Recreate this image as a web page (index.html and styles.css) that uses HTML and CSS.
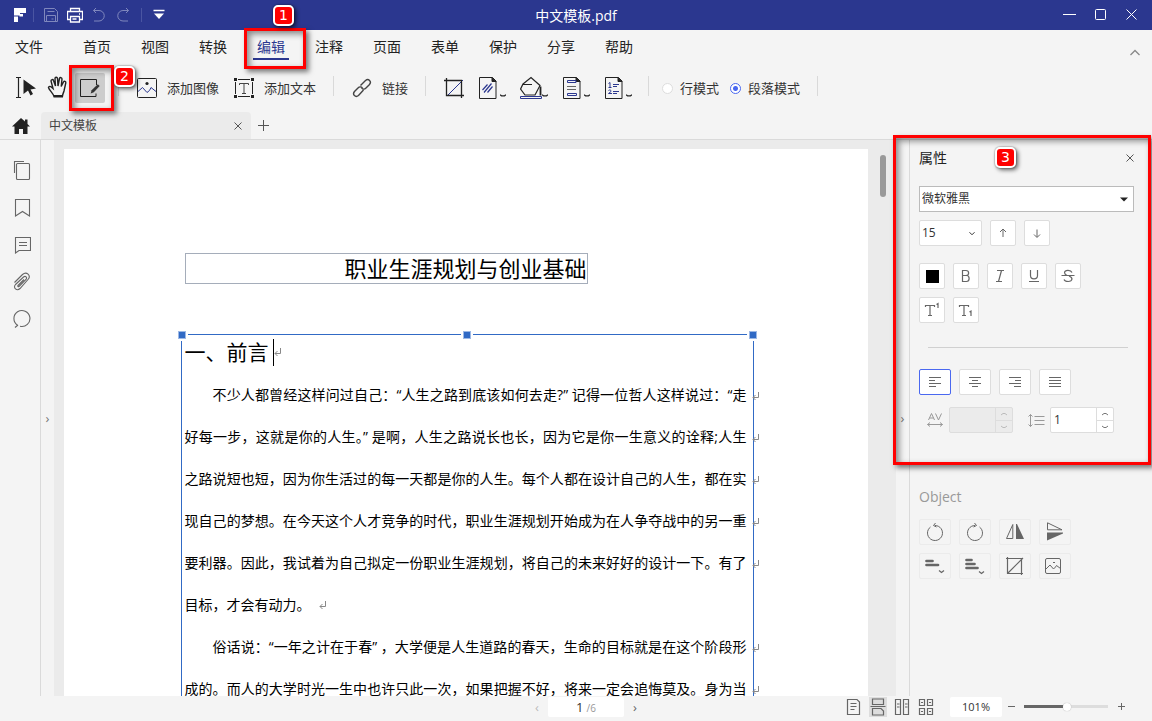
FILE: index.html
```html
<!DOCTYPE html>
<html lang="zh-CN">
<head>
<meta charset="utf-8">
<title>中文模板.pdf</title>
<link rel="stylesheet" href="styles.css">
</head>
<body>
<svg class="defs" aria-hidden="true">
  <symbol id="ret" viewBox="0 0 8 10"><path d="M6.500 1v5.500H1M3.500 4 1 6.500 3.500 9"/></symbol>
  <symbol id="chev" viewBox="0 0 6 4"><path d="M0 .8 1.500 1.800H4.500L6 .8"/></symbol>
  <symbol id="x" viewBox="0 0 10 10"><path d="M1.500 1.500l7 7M8.500 1.500l-7 7"/></symbol>
  <symbol id="up" viewBox="0 0 8 4"><path d="M1 3 3 1.500h2L7 3"/></symbol>
  <symbol id="down" viewBox="0 0 8 4"><path d="M1 1 3 2.500h2L7 1"/></symbol>
</svg>
<div class="app">
  <header class="titlebar">
    <div class="quick">
      <svg class="logo" viewBox="0 0 12 14" width="12" height="14"><path d="M0 0h12v5H6v2.500H0zM0 8.500h4V14H0zM5.500 6H9v2.500H5.500z" fill="#fff"/></svg>
      <span class="vline"></span>
      <button class="qbtn dim" aria-label="保存"><svg viewBox="0 0 16 16"><path d="M1.500 1.500h10l3 3v10h-13zM4.500 4.500h7M3.500 14.500v-6h9v6M8.500 12h2"/></svg></button>
      <button class="qbtn" aria-label="打印"><svg viewBox="0 0 16 16"><path d="M3.500 5V1.500h9V5M3.500 12.500h-3v-8h15v8h-3M3.500 9.500h9v5.500h-9zM12 7h1M5.500 12h4" stroke-width="1.300"/></svg></button>
      <button class="qbtn dim" aria-label="撤销"><svg viewBox="0 0 16 16"><path d="M5 1 2.500 3.500 5 6M2.500 3.500H8a5 5 0 0 1 0 10.500H3"/></svg></button>
      <button class="qbtn dim" aria-label="重做"><svg viewBox="0 0 16 16"><path d="M11 1l2.500 2.500L11 6M13.500 3.500H8A5 5 0 0 0 8 14h5"/></svg></button>
      <span class="vline"></span>
      <button class="qbtn" aria-label="更多"><svg viewBox="0 0 16 16"><path d="M2.500 3.500h11" stroke-width="1.500"/><path d="M3 6.500h10L8 12z" fill="#fff" stroke="none"/></svg></button>
    </div>
    <h1 class="doc-name">中文模板.pdf</h1>
    <div class="winbtns">
      <button aria-label="最小化"><svg viewBox="0 0 13 13"><path d="M0 5.500h13"/></svg></button>
      <button aria-label="最大化"><svg viewBox="0 0 13 13"><rect x="1.500" y=".5" width="10" height="10" rx="1"/></svg></button>
      <button aria-label="关闭"><svg viewBox="0 0 13 13"><path d="M1.500 .5l10 10M11.500 .5l-10 10"/></svg></button>
    </div>
  </header>

  <nav class="menu">
    <button class="file">文件</button>
    <button>首页</button>
    <button>视图</button>
    <button>转换</button>
    <div class="mark-host">
      <button class="current">编辑</button>
      <span class="frame frame-menu"></span><span class="badge badge-menu">1</span>
    </div>
    <button>注释</button>
    <button>页面</button>
    <button>表单</button>
    <button>保护</button>
    <button>分享</button>
    <button>帮助</button>
    <button class="collapse" aria-label="收起"><svg viewBox="0 0 12 7"><path d="M1.500 6 6 1.500 10.500 6"/></svg></button>
  </nav>

  <div class="toolbar">
    <button class="tool" aria-label="选择"><svg class="i24" viewBox="0 0 24 24"><path d="M2 1.500h5M4.500 1.500v20M2 21.500h5" stroke-width="1.200"/><path d="M9.500 3.500 22 12.500l-5.500 1 2.500 4.500-2.500 1.500-2.500-5-4.500 3.500z" fill="#222" stroke="none"/></svg></button>
    <button class="tool hand" aria-label="手型"><svg class="i24" viewBox="0 0 24 24"><path d="M8 20.500C7 17 3 14 2.500 11.500c.3-1.500 2-1.200 2.800-.5L7 12.500 5 5c0-1.500 2-2 2.500-.5L9.500 10 9 2.500C9 1 11.200.8 11.500 2.300L12 10l1.500-7.500c.5-1.500 2.500-1 2.500.5l-.8 7.500L17.500 6c.7-1.300 2.600-.7 2.300.8L18 15c-.5 2-1.500 3-1.500 5.500" stroke-width="1.400"/><path d="M7.500 19h9.500v2.500H7.500z" fill="#222" stroke="none"/></svg></button>
    <div class="mark-host">
      <button class="tool edit-on" aria-label="编辑"><svg viewBox="0 0 20 20"><path d="M16.500 7V1.500h-16v17H16v-3"/><path d="M17.800 6.300l1.900 1.700-5.900 6.300-3.100 1.200.9-3.200z" fill="#333" stroke="none"/></svg></button>
      <span class="frame frame-tool"></span><span class="badge badge-tool">2</span>
    </div>
    <span class="sep first"></span>
    <button class="tool"><svg viewBox="0 0 20 20"><rect x=".5" y=".5" width="19" height="19" rx="1"/><circle cx="10" cy="5.500" r="1.600" fill="#222" stroke="none"/><path class="b" d="M1 13.500 5.500 9.500l4.500 5 2.500-2 1.500-3 5 4"/></svg>添加图像</button>
    <button class="tool next"><svg viewBox="0 0 20 20"><path d="M4 1.500h12M4 18.500h12M1.500 4v12M18.500 4v12"/><path d="M5.500 7V5.500h9V7M10 5.500v10M8 15.500h4" stroke="#444"/><path d="M0 0h3v3H0zM17 0h3v3h-3zM0 17h3v3H0zM17 17h3v3h-3z" fill="#222" stroke="none"/></svg>添加文本</button>
    <span class="sep"></span>
    <button class="tool"><svg viewBox="0 0 20 20"><path d="M8.500 7.500l5-5c3-2.500 6.500 1 4 4L14 10c-1.500 1.500-3.500 1-4.500 0M11.500 12l-5 5.500c-3 2.500-6.500-1-4-4L6 10c1.500-1.500 3.500-1 4.500 0" stroke="#444" stroke-width="1.400"/></svg>链接</button>
    <span class="sep"></span>
    <button class="tool" aria-label="裁剪"><svg viewBox="0 0 20 20"><path class="b" d="M3 18 19 2"/><path d="M0 2.500h17.500V20M2.500 0v17.500H20" stroke-width="1.300"/></svg></button>
    <button class="tool drop d1" aria-label="水印"><svg class="i24" viewBox="0 0 24 24"><path d="M1.500 1.500h13l3.500 3.500v17.500h-16.500z"/><path d="M14 1.500v4h4z" fill="#222"/><path class="b" d="M4.500 14 9.500 8.500M6 16.500l7.500-9M9.500 16.500l5-6" stroke-width="1.200"/></svg><svg class="cv"><use href="#chev"/></svg></button>
    <button class="tool drop" aria-label="背景"><svg class="i24" viewBox="0 0 24 24"><path d="M3 8 11 1.500l9 8-5 9.500H5L.6 13z" stroke-width="1.200"/><path d="M3 8.500h9" /><path d="M20.500 10.500v9" stroke-width="1.800"/><path class="b" d="M.5 20.500h21v2H.5z"/></svg><svg class="cv"><use href="#chev"/></svg></button>
    <button class="tool drop" aria-label="页眉页脚"><svg class="i24" viewBox="0 0 24 24"><path d="M1.500 1.500h13l3.500 3.500v17.500h-16.500z"/><path d="M14 1.500v4h4z" fill="#222"/><path class="b" d="M5.500 4.500h8.500v2H5.500zM5.500 17.500h9v2h-9z"/><path d="M5 10.500h9M5 13.500h9" stroke="#666"/></svg><svg class="cv"><use href="#chev"/></svg></button>
    <button class="tool drop" aria-label="贝茨码"><svg class="i24" viewBox="0 0 24 24"><path d="M1.500 1.500h13l3.500 3.500v17.500h-16.500z"/><path d="M14 1.500v4h4z" fill="#222"/><path class="b" d="M4.500 7.500 6 6.500v5M4.500 11.500h3M9 8.500h6M9 10.500h4M4.500 14.500c1-1 3-.5 2.500 1L4.500 17.500H8M9 15.500h6M9 17.500h4"/></svg><svg class="cv"><use href="#chev"/></svg></button>
    <span class="sep last"></span>
    <label class="radio"><input type="radio" name="mode">行模式</label>
    <label class="radio"><input type="radio" name="mode" checked>段落模式</label>
    <span class="sep"></span>
  </div>

  <div class="tabs">
    <button class="home" aria-label="主页"><svg viewBox="0 0 18 16"><path d="M9 0 13 3.500V1.500h2.500V6L18 8.500h-2.500V16H11v-5H7v5H2.500V8.500H0z" fill="#222"/></svg></button>
    <div class="tab"><span>中文模板</span><button aria-label="关闭标签"><svg class="x"><use href="#x"/></svg></button></div>
    <button class="plus" aria-label="新标签"><svg viewBox="0 0 12 12"><path d="M0 5.500h11M5.500 0v11"/></svg></button>
  </div>

  <main class="main">
    <aside class="rail">
      <button aria-label="缩略图"><svg viewBox="0 0 18 20"><rect x="3.500" y="3.500" width="13" height="16" rx="1"/><path d="M1.500 13V1.500H11"/></svg></button>
      <button aria-label="书签"><svg viewBox="0 0 18 20"><path d="M2.500 2.500h14V19l-7-4.500-7 4.500z"/></svg></button>
      <button aria-label="批注"><svg viewBox="0 0 18 20"><path d="M2.500 3.500h15v13H6L2.500 19zM6 8.500h8M6 11.500h8"/></svg></button>
      <button aria-label="附件"><svg viewBox="0 0 18 20"><path d="M1.500 11.500 9.500 3.500c4-3.500 9 1 5.500 5L7 17.500c-3 3-7.500-.5-4.500-4L10.500 6c2-1.500 4 .5 2.500 2.500L6 15.500c-1 .5-1.500-.5-1-1L11 8.500"/></svg></button>
      <button aria-label="搜索"><svg viewBox="0 0 18 20"><path d="M4.500 17.200A8 8 0 1 1 7 18.300M5 17 2 19.500"/></svg></button>
    </aside>
    <button class="strip" aria-label="展开">›</button>
    <section class="canvas">
      <div class="page">
        <div class="sheet">
          <div class="title-box">职业生涯规划与创业基础</div>
          <div class="block">
            <i class="edge top-a"></i><i class="edge top-b"></i><i class="edge side-l"></i><i class="edge side-r"></i>
            <i class="grip g-l"></i><i class="grip g-m"></i><i class="grip g-r"></i>
            <h2>一、前言<span class="caret"></span><svg class="ret"><use href="#ret"/></svg></h2>
            <p class="indent">不少人都曾经这样问过自己：“人生之路到底该如何去走?” 记得一位哲人这样说过：“走<svg class="ret end"><use href="#ret"/></svg></p>
            <p>好每一步，这就是你的人生。” 是啊，人生之路说长也长，因为它是你一生意义的诠释;人生<svg class="ret end"><use href="#ret"/></svg></p>
            <p>之路说短也短，因为你生活过的每一天都是你的人生。每个人都在设计自己的人生，都在实<svg class="ret end"><use href="#ret"/></svg></p>
            <p>现自己的梦想。在今天这个人才竞争的时代，职业生涯规划开始成为在人争夺战中的另一重<svg class="ret end"><use href="#ret"/></svg></p>
            <p>要利器。因此，我试着为自己拟定一份职业生涯规划，将自己的未来好好的设计一下。有了<svg class="ret end"><use href="#ret"/></svg></p>
            <p class="short">目标，才会有动力。<svg class="ret"><use href="#ret"/></svg></p>
            <p class="indent">俗话说：“一年之计在于春” ，大学便是人生道路的春天，生命的目标就是在这个阶段形<svg class="ret end"><use href="#ret"/></svg></p>
            <p>成的。而人的大学时光一生中也许只此一次，如果把握不好，将来一定会追悔莫及。身为当<svg class="ret end"><use href="#ret"/></svg></p>
          </div>
        </div>
      </div>
      <div class="track"><span class="thumb"></span></div>
    </section>
    <button class="strip" aria-label="收起面板">›</button>
    <aside class="panel">
      <span class="frame frame-panel"></span><span class="badge badge-panel">3</span>
      <div class="panel-head"><h2>属性</h2><button aria-label="关闭属性"><svg class="x"><use href="#x"/></svg></button></div>
      <div class="pick font"><select aria-label="字体"><option>微软雅黑</option></select><svg viewBox="0 0 8 4"><path d="M0 0h8L4 4z" fill="#222"/></svg></div>
      <div class="row sizes">
        <div class="pick size"><select aria-label="字号"><option>15</option></select><svg viewBox="0 0 8 6"><path d="M1 1.500l3 3 3-3" fill="none" stroke="#333" stroke-width="1.200"/></svg></div>
        <button class="sq" aria-label="增大"><svg viewBox="0 0 16 16"><path d="M8 12V4.500M5 7l3-3 3 3"/></svg></button>
        <button class="sq" aria-label="减小"><svg viewBox="0 0 16 16"><path d="M8 4.500V12M5 9.500l3 3 3-3"/></svg></button>
      </div>
      <div class="row styles">
        <button class="sq" aria-label="颜色"><span class="swatch"></span></button>
        <button class="sq" aria-label="粗体"><svg viewBox="0 0 16 16"><path d="M4.500 2.500H8c3.500 0 3.500 5 0 5H4.500zM4.500 7.500H8.500c3.500 0 3.500 6 0 6h-4z" stroke-width="1.200"/></svg></button>
        <button class="sq" aria-label="斜体"><svg viewBox="0 0 16 16"><path d="M5 2.500h7M4 13.500h6M9.500 2.500l-3 11" stroke-width="1.200"/></svg></button>
        <button class="sq" aria-label="下划线"><svg viewBox="0 0 16 16"><path d="M4.500 2v5.500c0 4.500 7 4.500 7 0V2M3 13.500h10" stroke-width="1.200"/></svg></button>
        <button class="sq" aria-label="删除线"><svg viewBox="0 0 16 16"><path d="M12 4.500C11 2 5 1.500 4.500 4.500c0 1.500 1 2.200 2.500 3M1.500 7.500h13M9 8c2 .8 3 1.500 3 3-.5 3.500-7 3-8 .5" stroke-width="1.200"/></svg></button>
        <button class="sq" aria-label="上标"><svg viewBox="0 0 16 16"><path d="M1.500 5V3.500h9V5M6 3.500v10M4 13.500h4M12.500 2.500l1.500-1V6" stroke-width="1.200"/></svg></button>
        <button class="sq" aria-label="下标"><svg viewBox="0 0 16 16"><path d="M1.500 5V3.500h9V5M6 3.500v10M4 13.500h4M11.500 10l1.500-1v5" stroke-width="1.200"/></svg></button>
      </div>
      <hr>
      <div class="row wide">
        <button class="sq on" aria-label="左对齐"><svg viewBox="0 0 16 16"><path d="M2 3.500h12M2 6.500h6M2 9.500h12M2 12.500h7"/></svg></button>
        <button class="sq" aria-label="居中"><svg viewBox="0 0 16 16"><path d="M2 3.500h12M5 6.500h6M2 9.500h12M5 12.500h6"/></svg></button>
        <button class="sq" aria-label="右对齐"><svg viewBox="0 0 16 16"><path d="M2 3.500h12M8 6.500h6M2 9.500h12M7 12.500h7"/></svg></button>
        <button class="sq" aria-label="两端对齐"><svg viewBox="0 0 16 16"><path d="M2 3.500h12M2 6.500h12M2 9.500h12M2 12.500h12"/></svg></button>
      </div>
      <div class="row spacing">
        <svg class="glyph" viewBox="0 0 16 16"><path d="M1.500 8 4.500 1.500 7.500 8M2.500 6h4M8.500 1.500l3 6.500 3-6.500M.5 12.500h15M3 10.500l-2.500 2L3 14.500M13 10.500l2.500 2-2.500 2"/></svg>
        <div class="spin off"><input type="text" aria-label="字符间距" disabled><span><button disabled aria-label="增加"><svg><use href="#up"/></svg></button><button disabled aria-label="减少"><svg><use href="#down"/></svg></button></span></div>
        <svg class="glyph" viewBox="0 0 16 16"><path d="M2.500 2.500v12M.5 4.500l2-2 2 2M.5 12.500l2 2 2-2M6.500 4.500h10M6.500 8.500h10M6.500 12.500h10"/></svg>
        <div class="spin"><input type="text" aria-label="行间距" value="1"><span><button aria-label="增加"><svg><use href="#up"/></svg></button><button aria-label="减少"><svg><use href="#down"/></svg></button></span></div>
      </div>
      <h3>Object</h3>
      <div class="row wide objects">
        <button class="sq" aria-label="逆时针旋转"><svg viewBox="0 0 20 20"><path d="M5.500 5A7.500 7.500 0 1 0 10 3.500M10.500 1 8.500 3.500l3 1.500"/></svg></button>
        <button class="sq" aria-label="顺时针旋转"><svg viewBox="0 0 20 20"><path d="M14.500 5A7.500 7.500 0 1 1 10 3.500M9.500 1l2 2.500-3 1.500"/></svg></button>
        <button class="sq" aria-label="水平翻转"><svg viewBox="0 0 20 20"><path d="M7.800 2.500v14H1.500z"/><path d="M11 2h1l7 15h-8z" fill="#666" stroke="none"/></svg></button>
        <button class="sq" aria-label="垂直翻转"><svg viewBox="0 0 20 20"><path d="M2.500 .8v7H17z"/><path d="M2 10.500h16v1L2 18.500z" fill="#666" stroke="none"/></svg></button>
        <button class="sq" aria-label="对齐"><svg viewBox="0 0 20 20"><path d="M1.500 5h6M1.500 9h11.500" stroke-width="2.700" stroke-linecap="round"/><path d="M14 14.500l2.500 2 2.500-2" stroke-width="1.300"/></svg></button>
        <button class="sq" aria-label="分布"><svg viewBox="0 0 20 20"><path d="M1.500 4h5M1.500 8h8M1.500 12h11" stroke-width="2.700" stroke-linecap="round"/><path d="M14 15.500l2.500 2 2.500-2" stroke-width="1.300"/></svg></button>
        <button class="sq" aria-label="裁剪对象"><svg viewBox="0 0 20 20"><path d="M1 2.500h15.500V19M2.500 1v16.500H18M2.500 17.500 18 2" stroke-width="1.200"/></svg></button>
        <button class="sq shift" aria-label="替换图像"><svg viewBox="0 0 20 20"><rect x="2.500" y="2.500" width="15" height="15" rx="1.500"/><path d="M3 13l4-4 3.500 4 2-2 1-1.500 4 3M10 6.500h2"/></svg></button>
      </div>
    </aside>
  </main>

  <footer class="status">
    <div class="pager">
      <button class="prev" aria-label="上一页">‹</button>
      <div class="num"><span>1</span><small>/6</small></div>
      <button aria-label="下一页">›</button>
    </div>
    <div class="views">
      <button aria-label="单页"><svg viewBox="0 0 16 18"><path d="M1.500 1.500h9.500l2.500 2.500v12.500h-12zM4.500 5.500h6M4.500 8.500h6M4.500 11.500h4" stroke-width="1.200"/></svg></button>
      <button class="on" aria-label="连续"><svg viewBox="0 0 16 18"><path d="M2.500 1v5.500h11V1zM2.500 17v-6.500h8.500l2.500 2.500v4zM.5 8.500h15" stroke-width="1.200"/></svg></button>
      <button aria-label="双页"><svg viewBox="0 0 16 18"><path d="M1.500 1.500h5v15h-5zM9.500 1.500h5v15h-5zM3 6h2.500M3 9h2.500M11 6h2.500M11 9h2.500" stroke-width="1.200"/></svg></button>
      <button aria-label="双页连续"><svg viewBox="0 0 16 18"><path d="M1.500 1.500h5v6h-5zM9.500 1.500h5v6h-5zM1.500 10.500h5v6h-5zM9.500 10.500h5v6h-5zM3 4.500h2M11 4.500h2M3 13.500h2M11 13.500h2" stroke-width="1.200"/></svg></button>
      <input class="percent" type="text" value="101%" aria-label="缩放比例">
      <button class="step" aria-label="缩小"><svg viewBox="0 0 8 8"><path d="M0 3.500h7"/></svg></button>
      <input class="zoom" type="range" min="0" max="100" value="51" aria-label="缩放">
      <button class="step" aria-label="放大"><svg viewBox="0 0 8 8"><path d="M0 3.500h7M3.500 0v7"/></svg></button>
    </div>
  </footer>
</div>
</body>
</html>
```
FILE: styles.css
```css
* { box-sizing: border-box; }
body {
  margin: 0;
  background: #f4f4f4;
  color: #222;
  font: 14px/20px "Open Sans", "Noto Sans CJK SC", sans-serif;
}
.defs { position: absolute; width: 0; height: 0; }
button {
  display: flex;
  align-items: center;
  justify-content: center;
  padding: 0;
  border: 0;
  background: none;
  color: inherit;
  font: inherit;
  flex: none;
}
svg { display: block; flex: none; fill: none; stroke: currentColor; }
h1, h2, h3, p { margin: 0; font-weight: 400; }
.app { display: flex; flex-direction: column; height: 100vh; overflow: hidden; }

/* title bar */
.titlebar {
  display: grid;
  grid-template-columns: 1fr auto 1fr;
  align-items: center;
  flex: none;
  height: 30px;
  background: #2b378f;
  color: #fff;
}
.quick { display: flex; align-items: center; gap: 8px; padding-left: 14px; }
.logo { stroke: none; margin-right: -1px; }
.qbtn svg { width: 16px; height: 16px; }
.dim { color: #7f87bd; }
.vline { width: 1px; height: 14px; background: #4a55a2; }
.quick .vline + .qbtn { margin-left: 1px; }
.quick .qbtn + .vline { margin-left: 2px; }
.doc-name { padding-top: 2px; font-size: 14px; line-height: 28px; }
.winbtns { display: flex; justify-content: flex-end; gap: 18px; padding-right: 14px; }
.winbtns svg { width: 13px; height: 13px; }

/* menu */
.menu { display: flex; flex: none; gap: 22px; height: 34px; padding: 0 11px; }
.menu button { height: 30px; padding: 5px 4px 0; border-bottom: 2px solid transparent; }
.menu .file { margin-right: 10px; }
.menu .current { color: #2b378f; border-color: #2b378f; }
.menu .collapse { width: 12px; margin: 8px 0 0 auto; padding: 0; color: #888; }
.collapse svg { width: 12px; height: 7px; stroke-width: 1.3; }

/* callouts */
.mark-host { position: relative; }
.frame {
  position: absolute;
  z-index: 5;
  border: 3px solid #f00;
  box-shadow: 3px 3px 5px rgba(0,0,0,.5), inset 3px 3px 6px rgba(0,0,0,.45);
  pointer-events: none;
}
.frame-menu { inset: -2px -17px -5px -9px; }
.frame-tool { inset: -8px -9px; left: -6px; }
.frame-panel { top: -5px; right: 1px; left: -17px; height: 330px; }
.badge {
  position: absolute;
  z-index: 6;
  width: 21px;
  height: 21px;
  border: 2px solid #fff;
  border-radius: 5px;
  background: #f00;
  box-shadow: 2px 2px 4px rgba(0,0,0,.6), 0 0 1px 1px rgba(0,0,0,.15);
  color: #fff;
  font: 14px/17px "DejaVu Sans", sans-serif;
  text-align: center;
}
.badge-menu { top: -25px; left: 20px; }
.badge-tool { top: -7px; left: 39px; }
.badge-panel { top: 7px; left: 85px; }

/* toolbar */
.toolbar { display: flex; align-items: center; flex: none; height: 48px; padding-left: 14px; font-size: 13px; color: #333; }
.tool { gap: 10px; height: 30px; color: #333; }
.tool svg { width: 20px; height: 20px; stroke: #222; }
.tool svg.i24 { width: 24px; height: 24px; }
.tool .b { stroke: #2b378f; }
.tool.hand { margin: 0 5px 0 8px; }
.edit-on { width: 30px; background: #cdcdcd; border-radius: 2px; }
.tool.next { margin-left: 15px; }
.drop { width: 28px; gap: 0; margin-left: 14px; }
.drop.d1 { margin-left: 14px; }
.tool svg.cv { width: 6px; height: 4px; margin-top: 16px; margin-left: -2px; stroke-width: 1.3; }
.sep { width: 1px; height: 20px; margin: -4px 18px 0 17px; background: #d9d9d9; }
.sep.first { margin-left: 13px; }
.sep.last { margin: -4px 13px 0 16px; }
.radio { display: flex; align-items: center; gap: 7px; }
.radio + .radio { margin-left: 11px; }
.radio input { appearance: none; width: 11px; height: 11px; margin: 0; border: 1px solid #ddd; border-radius: 50%; background: #fff; }
.radio input:checked { border-color: #4a68f0; background: radial-gradient(#4a68f0 0 2px, #fff 3px); }

/* tabs */
.tabs { display: flex; align-items: center; flex: none; height: 28px; padding-left: 12px; border-bottom: 1px solid #dadada; }
.home svg { width: 18px; height: 16px; stroke: none; }
.tab {
  display: flex;
  align-items: center;
  justify-content: space-between;
  width: 210px;
  height: 27px;
  margin-left: 11px;
  padding: 0 8px;
  border-radius: 4px 4px 0 0;
  background: #ebebeb;
  color: #444;
  font-size: 12px;
}
.x { width: 10px; height: 10px; stroke: #555; }
.plus { margin-left: 7px; }
.plus svg { width: 12px; height: 12px; stroke: #555; }

/* work area */
.main { display: flex; flex: 1; min-height: 0; }
.rail { display: flex; flex-direction: column; align-items: center; gap: 17px; width: 41px; padding: 20px 0 0 3px; border-right: 1px solid #dadada; color: #666; }
.rail svg { width: 18px; height: 20px; stroke-width: 1.1; }
.strip { width: 13px; color: #777; font-size: 13px; }
.canvas { display: flex; flex: 1; min-width: 0; padding: 9px 0 0 10px; overflow: hidden; background: #ebebeb; }
.page { flex: 1; min-width: 0; padding: 104px 20px 0 22px; background: #fff; }
.sheet { max-width: 573px; margin: 0 auto; }
.title-box {
  width: 403px;
  margin-left: 4px;
  border: 1px solid #a5adba;
  color: #000;
  font-size: 22px;
  line-height: 29px;
  text-align: right;
}
.block { position: relative; margin-top: 50px; padding: 0 7px 0 4px; color: #000; }
.edge, .grip { position: absolute; background: #316ac5; }
.edge { height: 1px; top: 0; }
.top-a { left: 7px; right: 50%; margin-right: 6px; }
.top-b { left: 50%; right: 7px; margin-left: 6px; }
.side-l, .side-r { top: 7px; bottom: 0; width: 1px; height: auto; }
.side-l { left: 0; }
.side-r { right: 0; }
.grip { top: -3px; width: 8px; height: 8px; border: 1px solid #9db9e6; }
.g-l { left: -3px; }
.g-m { left: calc(50% - 4px); }
.g-r { right: -3px; }
.block h2 { display: flex; align-items: center; height: 36px; margin-bottom: 4px; font-size: 21px; line-height: 36px; }
.caret { width: 1px; height: 27px; margin-left: 4px; background: #000; }
.block p { position: relative; font-size: 14px; line-height: 42px; height: 42px; text-align: justify; text-align-last: justify; white-space: nowrap; }
.block p.indent { padding-left: 28px; }
.block p.short { display: flex; align-items: center; text-align-last: left; }
.ret { width: 8px; height: 10px; stroke: #888; }
.ret.end { position: absolute; right: -13px; top: 17px; }
.short .ret { margin-left: 8px; }
.track { flex: none; width: 28px; padding: 6px 0 0 12px; }
.thumb { display: block; width: 6px; height: 42px; border-radius: 3px; background: #999; }

/* properties */
.panel { position: relative; flex: none; width: 243px; padding: 0 18px 0 9px; border-left: 1px solid #dadada; }
.panel-head { display: flex; align-items: center; justify-content: space-between; height: 36px; margin-bottom: 10px; }
.panel-head h2 { font-size: 14px; }
.panel-head button { margin-right: -1px; }
.pick { position: relative; }
.pick select { appearance: none; width: 100%; height: 26px; padding: 0 2px; border: 1px solid #bbb; border-radius: 0; background: #fff; color: #333; font: 12px/22px "Open Sans", "Noto Sans CJK SC", sans-serif; }
.pick svg { position: absolute; top: 11px; right: 6px; width: 8px; height: 5px; stroke: none; }
.size { width: 63px; }
.size select { border-color: #ddd; border-radius: 2px; }
.row { display: flex; flex-wrap: wrap; gap: 8px; }
.sizes { margin-top: 8px; }
.styles { width: 170px; margin-top: 17px; }
.sq { width: 26px; height: 26px; border: 1px solid #ddd; border-radius: 2px; background: #fff; color: #666; }
.sq svg { width: 16px; height: 16px; }
.swatch { width: 13px; height: 13px; background: #000; }
hr { width: 200px; margin: 24px 0 21px 9px; border: 0; border-top: 1px solid #d0d0d0; }
.wide .sq { width: 32px; }
.sq.on { border-color: #4a68f0; }
.spacing { align-items: center; flex-wrap: nowrap; gap: 6px; margin-top: 12px; padding-left: 8px; }
.glyph { width: 16px; height: 16px; stroke: #999; overflow: visible; }
.spin + .glyph { margin-left: 9px; }
.spin { display: flex; width: 64px; height: 26px; border: 1px solid #ddd; border-radius: 2px; background: #fff; }
.spin input { flex: 1; min-width: 0; padding: 0 3px; border: 0; background: none; color: #333; font: 12px/22px "Open Sans", sans-serif; }
.spin span { width: 17px; border-left: 1px solid #ddd; }
.spin button { width: 16px; height: 12px; }
.spin button + button { border-top: 1px solid #ddd; }
.spin svg { width: 8px; height: 4px; stroke: #777; }
.spin.off { background: #ebebeb; }
.spin.off svg { stroke: #bbb; }
h3 { margin: 54px 0 12px; color: #999; font-size: 14px; line-height: 20px; }
.wide.objects { width: 160px; }
.objects .sq { border-color: #ebebeb; background: #f4f4f4; }
.objects svg { width: 20px; height: 20px; }
.objects .shift svg { margin-right: 4px; }

/* status bar */
.status { display: grid; grid-template-columns: 1fr auto 1fr; flex: none; align-items: center; height: 25px; padding: 0 26px 4px 46px; }
.pager { grid-column: 2; display: flex; align-items: center; gap: 9px; font-size: 13px; color: #666; }
.pager .prev { color: #bbb; }
.num { display: flex; align-items: baseline; justify-content: center; gap: 3px; width: 76px; height: 20px; border-radius: 2px; background: #fff; color: #333; }
.num small { color: #999; font-size: 10px; }
.views { display: flex; align-items: center; justify-content: flex-end; gap: 6px; color: #666; }
.views > button:not(.step) { width: 18px; height: 20px; }
.views svg { width: 16px; height: 18px; }
.views .on { background: #ddd; }
.percent { width: 52px; height: 20px; margin-left: 9px; padding: 0; border: 0; border-radius: 2px; background: #fff; color: #333; text-align: center; font: 11px/20px "Open Sans", sans-serif; }
.views .step svg { width: 8px; height: 8px; }
.zoom { appearance: none; width: 84px; height: 12px; margin: 0 4px 0 2px; background: linear-gradient(90deg, #666 50%, #ddd 50%) center / 100% 3px no-repeat; }
.zoom::-webkit-slider-thumb { appearance: none; width: 8px; height: 8px; border-radius: 50%; background: #fff; box-shadow: 0 0 1px #999; }
```
